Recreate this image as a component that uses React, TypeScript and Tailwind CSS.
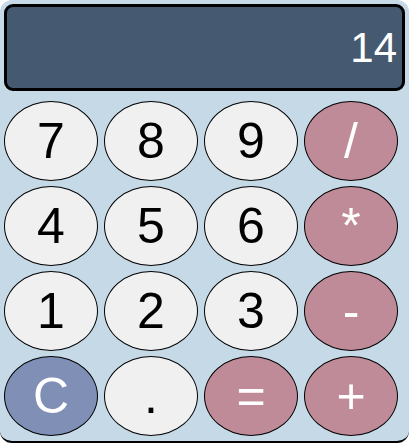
const keys = [
  { label: "7", kind: "num" },
  { label: "8", kind: "num" },
  { label: "9", kind: "num" },
  { label: "/", kind: "op" },
  { label: "4", kind: "num" },
  { label: "5", kind: "num" },
  { label: "6", kind: "num" },
  { label: "*", kind: "op" },
  { label: "1", kind: "num" },
  { label: "2", kind: "num" },
  { label: "3", kind: "num" },
  { label: "-", kind: "op" },
  { label: "C", kind: "clear" },
  { label: ".", kind: "num" },
  { label: "=", kind: "op" },
  { label: "+", kind: "op" },
];

const keyStyles: Record<string, string> = {
  num: "bg-[#f0f0f0] text-black",
  op: "bg-[#c08b98] text-white",
  clear: "bg-[#7f8fb5] text-white",
};

export default function App() {
  return (
    <div
      className="w-[409px] h-[443px] bg-[#c5d9e7] rounded-[12px] border-b-2 border-black p-[4px]"
      style={{ fontFamily: '"Liberation Sans", Arial, sans-serif' }}
    >
      <div className="h-[87px] rounded-[9px] border-[3px] border-black bg-[#455a70] flex items-center justify-end pr-[5px]">
        <span className="text-white text-[42px] leading-none">14</span>
      </div>

      <div className="mt-[10px] grid grid-cols-[repeat(4,94px)] auto-rows-[80px] gap-x-[6px] gap-y-[5px]">
        {keys.map((k) => (
          <button
            key={k.label}
            className={`rounded-[50%] border border-black flex items-center justify-center text-[50px] leading-none ${keyStyles[k.kind]}`}
          >
            {k.label}
          </button>
        ))}
      </div>
    </div>
  );
}
